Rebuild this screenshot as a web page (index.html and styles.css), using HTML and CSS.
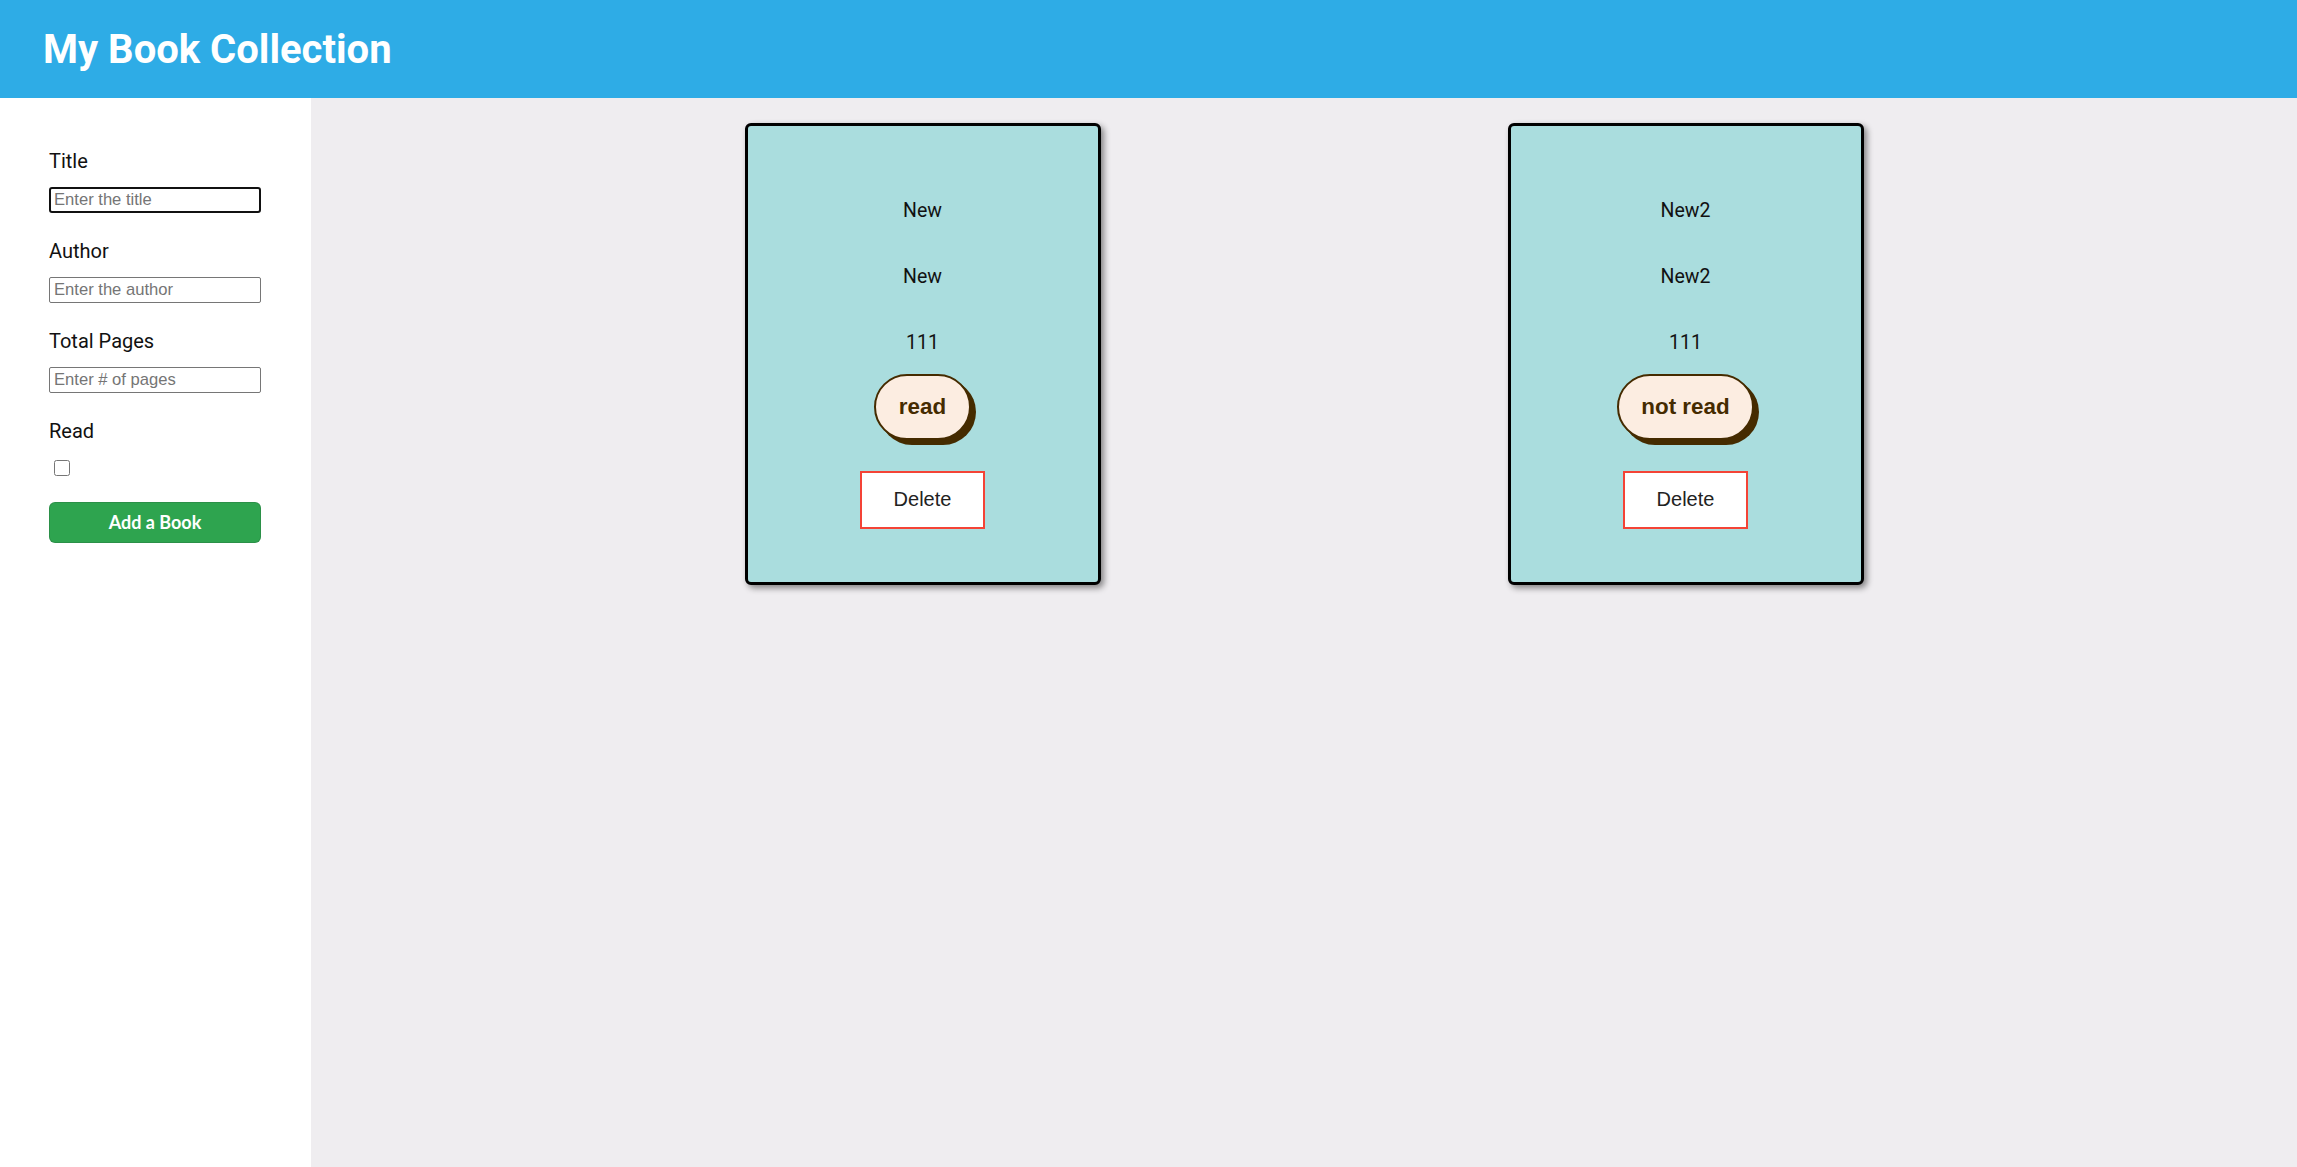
FILE: index.html
```html
<!DOCTYPE html>
<html lang="en">
<head>
<meta charset="utf-8">
<title>My Book Collection</title>
<link rel="stylesheet" href="styles.css">
</head>
<body>
<header class="topbar">
  <h1 class="brand">My Book Collection</h1>
</header>
<div class="layout">
  <aside class="sidebar">
    <form class="book-form">
      <label class="field-label" for="title">Title</label>
      <input class="field-input focused" id="title" type="text" placeholder="Enter the title">
      <label class="field-label" for="author">Author</label>
      <input class="field-input" id="author" type="text" placeholder="Enter the author">
      <label class="field-label" for="pages">Total Pages</label>
      <input class="field-input" id="pages" type="text" placeholder="Enter # of pages">
      <label class="field-label" for="read">Read</label>
      <input class="field-check" id="read" type="checkbox">
      <button class="add-btn" type="button">Add a Book</button>
    </form>
  </aside>
  <main class="library">
    <div class="card">
      <p class="card-text">New</p>
      <p class="card-text">New</p>
      <p class="card-text last">111</p>
      <button class="status-btn" type="button">read</button>
      <button class="delete-btn" type="button">Delete</button>
    </div>
    <div class="card">
      <p class="card-text">New2</p>
      <p class="card-text">New2</p>
      <p class="card-text last">111</p>
      <button class="status-btn" type="button">not read</button>
      <button class="delete-btn" type="button">Delete</button>
    </div>
  </main>
</div>
</body>
</html>
```

FILE: styles.css
```css
* { box-sizing: border-box; }

body {
  margin: 0;
  font-family: Roboto, "Liberation Sans", sans-serif;
  background: #efedf0;
}

.topbar {
  height: 98px;
  background: #2eace6;
  display: flex;
  align-items: center;
  padding-left: 43px;
}

.brand {
  margin: 0;
  color: #ffffff;
  font-size: 40px;
  font-weight: 700;
  line-height: normal;
}

.layout {
  display: grid;
  grid-template-columns: 311px 1fr;
  min-height: calc(100vh - 98px);
}

.sidebar {
  background: #ffffff;
  padding: 52px 0 0 49px;
}

.book-form {
  display: flex;
  flex-direction: column;
  align-items: flex-start;
  width: 212px;
}

.field-label {
  font-size: 20px;
  line-height: 23.5px;
  color: #111;
  margin-bottom: 13px;
}

.field-input {
  width: 212px;
  height: 26px;
  margin: 0 0 27.5px 0;
  padding: 1px 4px;
  border: 1px solid #767676;
  border-radius: 2px;
  font-family: "Liberation Sans", Arial, sans-serif;
  font-size: 16.6px;
  background: #fff;
}

.field-input::placeholder { color: #757575; }

.field-input.focused {
  border: 2px solid #111;
  border-radius: 3px;
  padding: 0 3px;
}

.field-check {
  width: 16px;
  height: 16px;
  margin: 3px 0 26px 5px;
}

.add-btn {
  width: 212px;
  height: 41px;
  background: #2ea44f;
  color: #fff;
  border: 1px solid rgba(27, 31, 35, 0.15);
  border-radius: 6px;
  font-family: Lato, "Open Sans", sans-serif;
  font-weight: 700;
  font-size: 18px;
  cursor: pointer;
}

.library {
  display: grid;
  grid-template-columns: repeat(2, 1fr);
  align-content: start;
  justify-items: center;
  padding: 25px 230px;
}

.card {
  width: 356px;
  height: 462px;
  border: 3px solid #000;
  border-radius: 6px;
  background: #aaddde;
  box-shadow: 3px 3px 6px rgba(0, 0, 0, 0.45);
  display: flex;
  flex-direction: column;
  align-items: center;
  padding-top: 72.5px;
}

.card-text {
  margin: 0 0 43.3px 0;
  font-size: 19.5px;
  line-height: normal;
  color: #111;
}

.card-text.last { margin-bottom: 19.8px; }

.status-btn {
  font-family: "Liberation Sans", Arial, sans-serif;
  font-size: 22.4px;
  font-weight: 700;
  line-height: normal;
  color: #452b00;
  background: #fcede1;
  border: 2px solid #452b00;
  border-radius: 40px;
  padding: 17.9px 22.4px;
  box-shadow: 5px 5px 0 #452b00;
  margin-bottom: 31.4px;
  cursor: pointer;
}

.delete-btn {
  font-family: "Liberation Sans", Arial, sans-serif;
  font-size: 20px;
  line-height: normal;
  color: #222;
  background: #fff;
  border: 2px solid #f44336;
  padding: 15.3px 31.5px;
  cursor: pointer;
}
```
